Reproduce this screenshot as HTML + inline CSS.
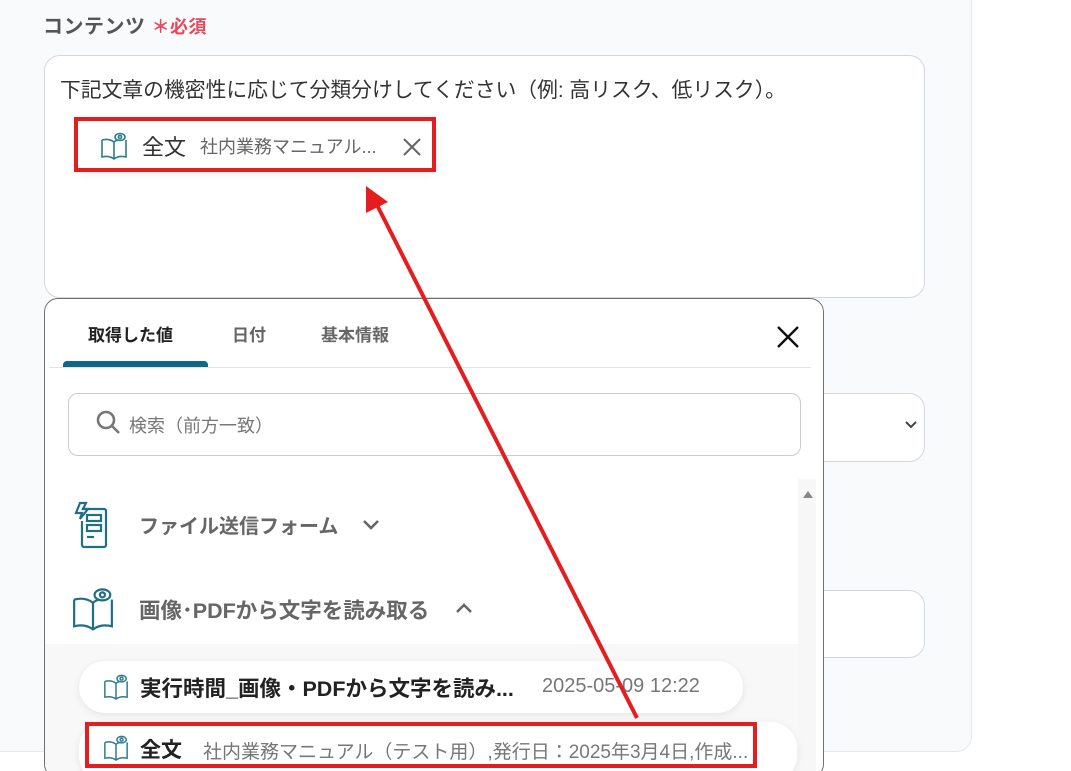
<!DOCTYPE html>
<html><head><meta charset="utf-8"><style>
*{margin:0;padding:0;box-sizing:border-box}
html,body{width:1071px;height:771px;overflow:hidden}
body{background:#fff;font-family:"Liberation Sans","Noto Sans CJK JP",sans-serif;position:relative}
.card{position:absolute;left:-20px;top:-20px;width:992px;height:772px;background:#f9fafb;border:1px solid #e5e7eb;border-radius:16px}
.abs{position:absolute}
.label{left:43px;top:10px;font-size:20px;color:#555;font-weight:bold;letter-spacing:0.5px}
.req{color:#e8485a;font-size:18px}
.box{background:#fff;border:1px solid #d4d7dd;border-radius:16px}
.pop{left:44px;top:298px;width:780px;height:480px;background:#fff;border:1.5px solid #707070;border-radius:14px;overflow:hidden}
.tab{position:absolute;top:22px;font-size:17px;font-weight:bold;color:#666}
.pill{position:absolute;background:#fff;border-radius:26px;box-shadow:0 2px 8px rgba(0,0,0,.08)}
</style></head><body>
<div class="card"></div>
<div class="abs label">コンテンツ <span class="req">＊必須</span></div>
<div class="abs box" style="left:44px;top:55px;width:881px;height:243px"></div>
<div class="abs" style="left:60px;top:73px;font-size:20.8px;color:#333;white-space:nowrap">下記文章の機密性に応じて分類分けしてください（例: 高リスク、低リスク）。</div>
<div class="abs" style="left:78px;top:120px;width:356px;height:50px;background:#fff;border-radius:6px;box-shadow:0 2px 10px rgba(0,0,0,.12)"></div>
<svg class="abs" style="left:100px;top:131px" width="28" height="30" viewBox="0 0 28 30" fill="none" stroke="#2c7d8f" stroke-width="1.6"><path d="M2 9v17c4-1 8-1 12 2c4-3 8-3 12-2V9"/><path d="M2 9c4-1 8-1 12 2v17"/><path d="M14 11c1-1 2-1.5 4-2"/><ellipse cx="20" cy="6" rx="5" ry="3.5"/><circle cx="20" cy="6" r="1.6"/></svg>
<div class="abs" style="left:142px;top:130px;font-size:22px;color:#333">全文</div>
<div class="abs" style="left:200px;top:133px;font-size:18px;color:#666;white-space:nowrap">社内業務マニュアル...</div>
<svg class="abs" style="left:402px;top:137px" width="20" height="20"><path d="M2 2l16 16M18 2L2 18" stroke="#666" stroke-width="2"/></svg>
<div class="abs box" style="left:44px;top:393px;width:881px;height:69px"></div>
<svg class="abs" style="left:904px;top:420px" width="14" height="10"><path d="M2 2l5 5 5-5" stroke="#444" stroke-width="2" fill="none"/></svg>
<div class="abs box" style="left:44px;top:590px;width:881px;height:68px"></div>
<div class="abs pop">
 <div class="tab" style="left:43px;color:#222">取得した値</div>
 <div class="tab" style="left:187px">日付</div>
 <div class="tab" style="left:276px">基本情報</div>
 <div class="abs" style="left:18px;top:62px;width:145px;height:6px;background:#0e6a84;border-radius:4px 4px 0 0"></div>
 <div class="abs" style="left:4px;top:68px;width:762px;height:1px;background:#e3e3e3"></div>
 <svg class="abs" style="left:731px;top:26px" width="24" height="24"><path d="M2 2l20 20M22 2L2 22" stroke="#111" stroke-width="2.4"/></svg>
 <div class="abs" style="left:23px;top:94px;width:733px;height:63px;border:1px solid #ccc;border-radius:10px"></div>
 <svg class="abs" style="left:51px;top:111px" width="26" height="26" fill="none" stroke="#777" stroke-width="2.6"><circle cx="10" cy="10" r="8"/><path d="M16 16l7 7"/></svg>
 <div class="abs" style="left:84px;top:113px;font-size:18px;color:#777;white-space:nowrap">検索（前方一致）</div>
 <div class="abs" style="left:0;top:345px;width:756px;height:160px;background:#f8f8f8"></div>
 <div class="abs" style="left:753px;top:180px;width:18px;height:320px;background:#f7f7f7"></div>
 <svg class="abs" style="left:757px;top:191px" width="12" height="9"><path d="M1 8l5-7 5 7z" fill="#888"/></svg>
 <svg class="abs" style="left:25px;top:202px" width="44" height="48" fill="none" stroke="#1f7086" stroke-width="2.2"><path d="M12 8h22a2 2 0 0 1 2 2v34a2 2 0 0 1-2 2H14a2 2 0 0 1-2-2V20"/><path d="M6 12l4-10h6l-3 6h5l-8 10 2-6H6z"/><rect x="17" y="14" width="14" height="6"/><rect x="17" y="24" width="14" height="6"/><path d="M17 36h7"/></svg>
 <div class="abs" style="left:94px;top:211px;font-size:20px;font-weight:bold;color:#666;white-space:nowrap">ファイル送信フォーム</div>
 <svg class="abs" style="left:317px;top:220px" width="18" height="12"><path d="M2 2l7 7 7-7" stroke="#666" stroke-width="2.6" fill="none"/></svg>
 <svg class="abs" style="left:26px;top:286px" width="44" height="48" viewBox="0 0 28 30" fill="none" stroke="#1f7086" stroke-width="1.4"><path d="M2 9v17c4-1 8-1 12 2c4-3 8-3 12-2V9"/><path d="M2 9c4-1 8-1 12 2v17"/><path d="M14 11c1-1 2-1.5 4-2"/><ellipse cx="20" cy="6" rx="5" ry="3.5"/><circle cx="20" cy="6" r="1.6"/></svg>
 <div class="abs" style="left:94px;top:295px;font-size:21.5px;font-weight:bold;color:#666;white-space:nowrap">画像･PDFから文字を読み取る</div>
 <svg class="abs" style="left:410px;top:303px" width="18" height="12"><path d="M2 10l7-7 7 7" stroke="#666" stroke-width="2.6" fill="none"/></svg>
 <div class="pill" style="left:34px;top:362px;width:664px;height:52px"></div>
 <svg class="abs" style="left:58px;top:374px" width="26" height="28" viewBox="0 0 28 30" fill="none" stroke="#2c7d8f" stroke-width="1.6"><path d="M2 9v17c4-1 8-1 12 2c4-3 8-3 12-2V9"/><path d="M2 9c4-1 8-1 12 2v17"/><path d="M14 11c1-1 2-1.5 4-2"/><ellipse cx="20" cy="6" rx="5" ry="3.5"/><circle cx="20" cy="6" r="1.6"/></svg>
 <div class="abs" style="left:95px;top:373px;font-size:21.5px;font-weight:bold;color:#222;white-space:nowrap">実行時間_画像・PDFから文字を読み...</div>
 <div class="abs" style="left:497px;top:376px;font-size:20px;color:#777;white-space:nowrap">2025-05-09 12:22</div>
 <div class="pill" style="left:34px;top:423px;width:718px;height:60px"></div>
 <svg class="abs" style="left:58px;top:435px" width="26" height="28" viewBox="0 0 28 30" fill="none" stroke="#2c7d8f" stroke-width="1.6"><path d="M2 9v17c4-1 8-1 12 2c4-3 8-3 12-2V9"/><path d="M2 9c4-1 8-1 12 2v17"/><path d="M14 11c1-1 2-1.5 4-2"/><ellipse cx="20" cy="6" rx="5" ry="3.5"/><circle cx="20" cy="6" r="1.6"/></svg>
 <div class="abs" style="left:95px;top:435px;font-size:21px;font-weight:bold;color:#222">全文</div>
 <div class="abs" style="left:158px;top:438px;font-size:19px;color:#777;white-space:nowrap">社内業務マニュアル（テスト用）,発行日：2025年3月4日,作成...</div>
</div>
<svg class="abs" style="left:0;top:0" width="1071" height="771">
 <rect x="76" y="119" width="358" height="51" fill="none" stroke="#e41e20" stroke-width="4"/>
 <rect x="87" y="724" width="668" height="42" fill="none" stroke="#e41e20" stroke-width="4"/>
 <line x1="637" y1="718" x2="376" y2="203" stroke="#e41e20" stroke-width="4"/>
 <path d="M366 186L366 213L388 202Z" fill="#e41e20"/>
</svg>
</body></html>
